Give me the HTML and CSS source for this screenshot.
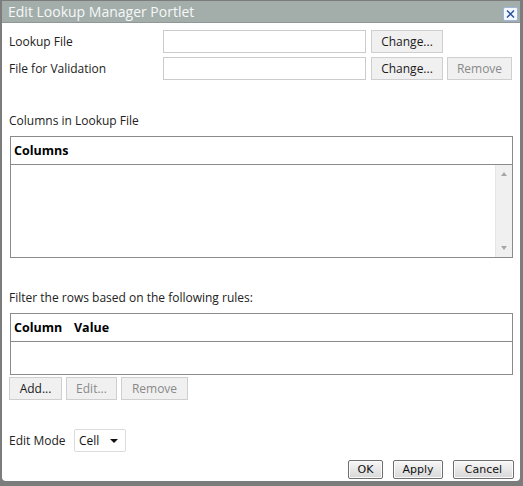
FILE: index.html
```html
<!DOCTYPE html>
<html>
<head>
<meta charset="utf-8">
<link rel="stylesheet" href="styles.css">
</head>
<body>
<div class="window">
  <div class="titlebar">
    <span class="title">Edit Lookup Manager Portlet</span>
    <span class="close"><svg width="15" height="14" viewBox="0 0 15 14"><rect x="0.5" y="0.5" width="14" height="13" rx="1.5" fill="#f4f8ff" stroke="#9fb6dc"/><path d="M4 3.5 L11 10.5 M11 3.5 L4 10.5" stroke="#2a4f9c" stroke-width="1.5" fill="none"/></svg></span>
  </div>
  <div class="content">
    <div class="filerow">
      <span class="label">Lookup File</span>
      <span class="input"></span>
      <span class="btn change">Change...</span>
    </div>
    <div class="filerow">
      <span class="label">File for Validation</span>
      <span class="input"></span>
      <span class="btn change">Change...</span>
      <span class="btn remove disabled">Remove</span>
    </div>

    <div class="section-label first">Columns in Lookup File</div>
    <div class="grid grid-columns">
      <div class="grid-head"><span class="hcell">Columns</span></div>
      <div class="grid-body">
        <div class="scrollbar">
          <span class="arrow up"></span>
          <span class="arrow down"></span>
        </div>
      </div>
    </div>

    <div class="section-label second">Filter the rows based on the following rules:</div>
    <div class="grid grid-filter">
      <div class="grid-head"><span class="hcell col1">Column</span><span class="hcell">Value</span></div>
      <div class="grid-body"></div>
    </div>
    <div class="btnrow">
      <span class="btn add">Add...</span>
      <span class="btn edit disabled">Edit...</span>
      <span class="btn remove2 disabled">Remove</span>
    </div>

    <div class="moderow">
      <span class="label-inline">Edit Mode</span>
      <span class="select"><span class="sel-text">Cell</span><span class="sel-arrow"></span></span>
    </div>
    <div class="footer">
      <span class="dbtn ok">OK</span>
      <span class="dbtn apply">Apply</span>
      <span class="dbtn cancel">Cancel</span>
    </div>
  </div>
</div>
</body>
</html>
```

FILE: styles.css
```css
html, body {
  margin: 0;
  padding: 0;
}
body {
  width: 523px;
  height: 486px;
  overflow: hidden;
  background: #ffffff;
  font-family: "Open Sans", "Noto Sans", sans-serif;
  font-size: 12px;
  color: #222;
}
.window {
  box-sizing: border-box;
  width: 523px;
  height: 486px;
  background: #7c7c7c;
  padding: 1px 3px 5px 2px;
  display: flex;
  flex-direction: column;
}
.titlebar {
  height: 21px;
  background: #a3aeab;
  display: flex;
  align-items: center;
  justify-content: space-between;
  padding: 0 2px 0 6px;
  flex: none;
}
.title {
  color: #f6f8f8;
  font-size: 14px;
  line-height: 21px;
}
.close {
  display: flex;
  margin-top: 4px;
}
.content {
  flex: 1;
  background: #ffffff;
  border-radius: 0 0 4px 4px;
  padding: 7px 6px 0 7px;
  display: flex;
  flex-direction: column;
  border-top: 1px solid #8f9896;
}
.filerow {
  display: flex;
  align-items: center;
  height: 23px;
  margin-bottom: 4px;
}
.label {
  width: 154px;
  line-height: 16px;
}
.input {
  box-sizing: border-box;
  width: 203px;
  height: 23px;
  border: 1px solid #cbcbcb;
  background: #fff;
  margin-right: 5px;
}
.btn {
  box-sizing: border-box;
  height: 23px;
  border: 1px solid #cfcfcf;
  background: #f0f0f0;
  display: flex;
  align-items: center;
  justify-content: center;
  color: #1a1a1a;
}
.btn.disabled {
  color: #8a8a8a;
}
.change { width: 72px; }
.remove { width: 65px; margin-left: 4px; }
.section-label {
  line-height: 16px;
}
.section-label.first {
  margin-top: 29px;
}
.section-label.second {
  margin-top: 32px;
}
.grid {
  box-sizing: border-box;
  width: 503px;
  margin-left: 1px;
  margin-top: 7px;
  border: 1px solid #8a8a8a;
  display: flex;
  flex-direction: column;
}
.grid-columns { height: 122px; }
.grid-filter { height: 62px; }
.grid-head {
  height: 27px;
  border-bottom: 1px solid #8a8a8a;
  display: flex;
  align-items: center;
  padding-left: 3px;
  font-weight: bold;
  font-size: 12.5px;
  color: #000;
  flex: none;
}
.hcell.col1 { width: 60px; }
.grid-body {
  flex: 1;
  display: flex;
  justify-content: flex-end;
}
.scrollbar {
  width: 16px;
  background: #f0f0f0;
  border-left: 1px solid #e6e6e6;
  display: flex;
  flex-direction: column;
  justify-content: space-between;
  align-items: center;
  padding: 7px 0 7px;
}
.arrow {
  width: 0;
  height: 0;
  border-left: 3.5px solid transparent;
  border-right: 3.5px solid transparent;
}
.arrow.up { border-bottom: 4px solid #a6a6a6; }
.arrow.down { border-top: 4px solid #a6a6a6; }
.btnrow {
  display: flex;
  margin-top: 2px;
  gap: 4px;
}
.btnrow .btn { height: 23px; }
.add { width: 53px; }
.edit { width: 51px; }
.remove2 { width: 67px; }
.moderow {
  display: flex;
  align-items: center;
  margin-top: 29px;
  height: 23px;
}
.label-inline {
  width: 65px;
}
.select {
  box-sizing: border-box;
  width: 52px;
  height: 23px;
  border: 1px solid #dcdcdc;
  border-radius: 2px;
  display: flex;
  align-items: center;
  justify-content: space-between;
  padding: 0 7px 0 4px;
  color: #111;
}
.sel-arrow {
  width: 0;
  height: 0;
  border-left: 4px solid transparent;
  border-right: 4px solid transparent;
  border-top: 4px solid #111;
}
.footer {
  display: flex;
  justify-content: flex-end;
  gap: 10px;
  margin-top: 8px;
}
.dbtn {
  box-sizing: border-box;
  height: 19px;
  border: 1px solid #6f6f6f;
  border-radius: 2px;
  background: linear-gradient(#f7f7f7, #e4e4e4 60%, #d8d8d8);
  box-shadow: inset 0 0 0 1px #fbfbfb;
  display: flex;
  align-items: center;
  justify-content: center;
  font-family: "DejaVu Sans", sans-serif;
  font-size: 11px;
  color: #111;
}
.ok { width: 35px; }
.apply { width: 50px; }
.cancel { width: 61px; }
```
